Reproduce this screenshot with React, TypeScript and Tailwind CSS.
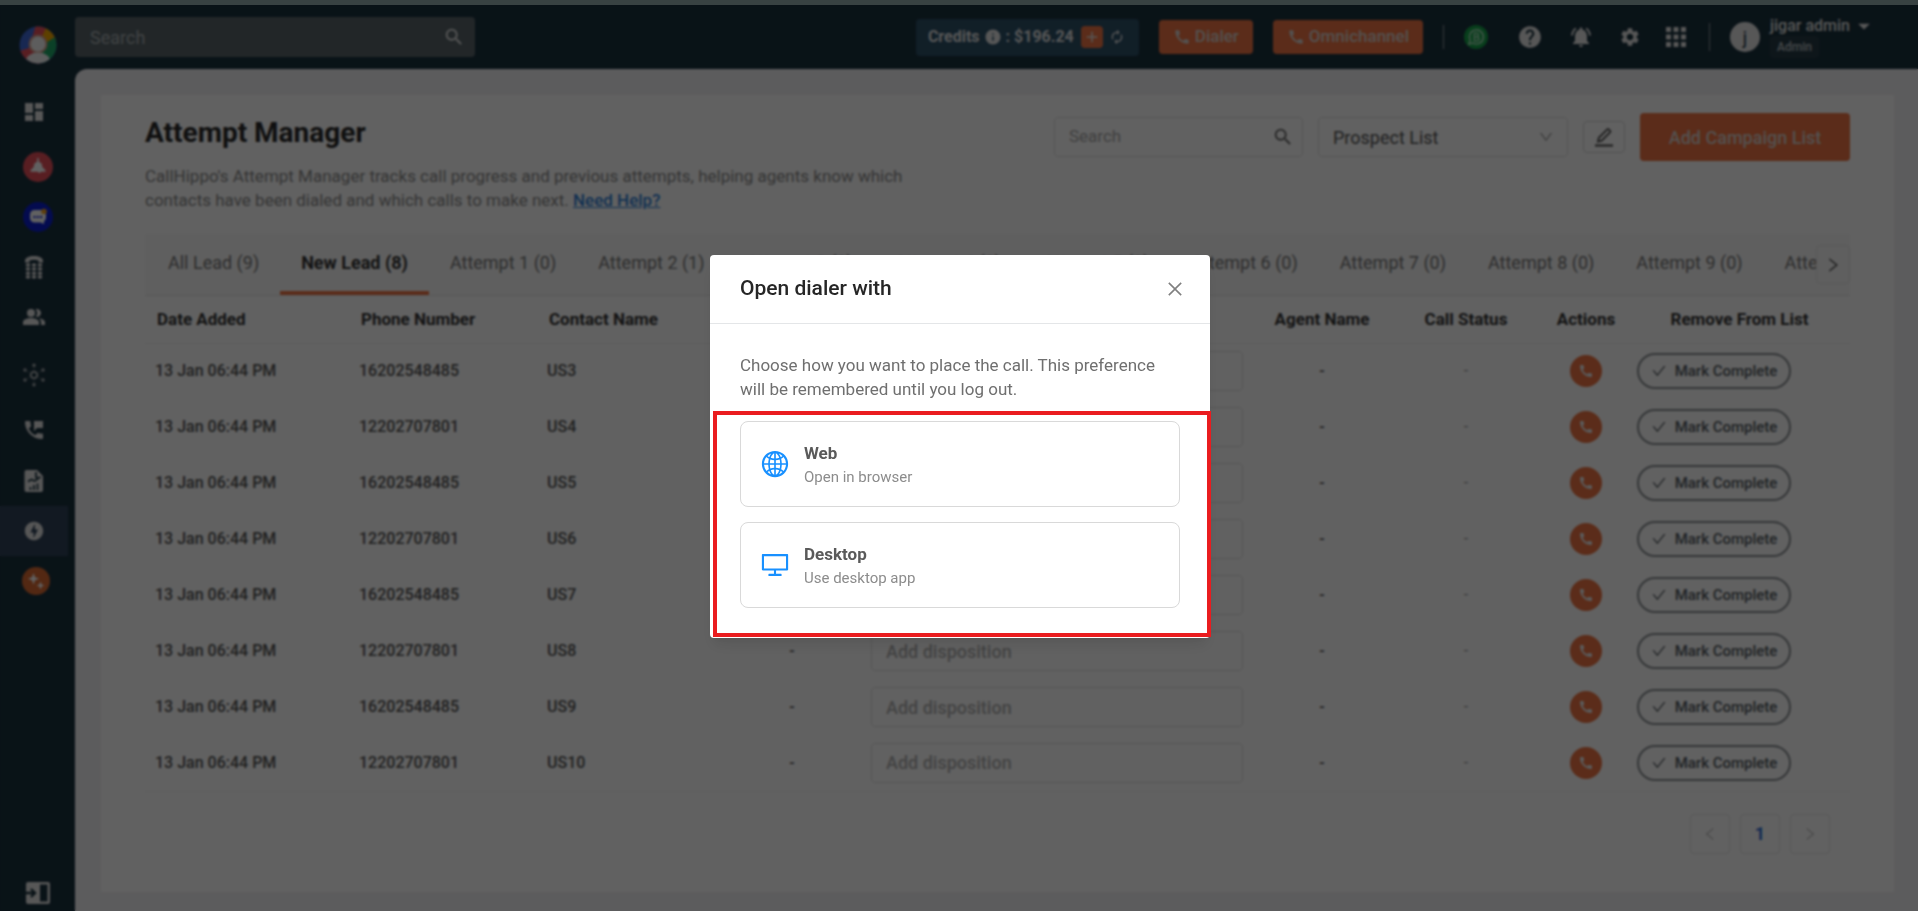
import type { ReactNode } from 'react';
import {
  MdAdd,
  MdApps,
  MdArrowDropDown,
  MdAutorenew,
  MdCall,
  MdDashboard,
  MdHelp,
  MdInfo,
  MdNotificationsActive,
  MdOfflineBolt,
  MdPeopleAlt,
  MdPermPhoneMsg,
  MdSearch,
  MdSettings,
} from 'react-icons/md';
import {
  AiOutlineCheck,
  AiOutlineClose,
  AiOutlineDesktop,
  AiOutlineDown,
  AiOutlineGlobal,
  AiOutlineLeft,
  AiOutlineRight,
} from 'react-icons/ai';

const leads = [
  { phone: '16202548485', name: 'US3' },
  { phone: '12202707801', name: 'US4' },
  { phone: '16202548485', name: 'US5' },
  { phone: '12202707801', name: 'US6' },
  { phone: '16202548485', name: 'US7' },
  { phone: '12202707801', name: 'US8' },
  { phone: '16202548485', name: 'US9' },
  { phone: '12202707801', name: 'US10' },
];

const tabs = [
  'All Lead (9)',
  'New Lead (8)',
  'Attempt 1 (0)',
  'Attempt 2 (1)',
  'Attempt 3 (0)',
  'Attempt 4 (0)',
  'Attempt 5 (0)',
  'Attempt 6 (0)',
  'Attempt 7 (0)',
  'Attempt 8 (0)',
  'Attempt 9 (0)',
  'Attempt 10 (0)',
];

function Logo() {
  return (
    <svg viewBox="0 0 38 38" className="size-[38px]">
      <clipPath id="logo-clip">
        <circle cx="19" cy="19" r="18.5" />
      </clipPath>
      <g clipPath="url(#logo-clip)">
        <rect width="38" height="38" fill="#3f6ad8" />
        <path d="M8 30 L17 -2 L30 -2 L24 12 Z" fill="#e8505b" />
        <path d="M19 19 L27 2 L42 4 L36 16 Z" fill="#f5a800" />
        <path d="M22 20 L36 11 L40 14 L40 40 L24 40 Z" fill="#1fa968" />
        <path d="M19 19 L-2 26 L4 40 L22 40 Z" fill="#e8505b" />
        <circle cx="19" cy="18" r="9.500" fill="#d9a08e" />
        <circle cx="19" cy="18" r="7.500" fill="#f4f4f4" />
        <ellipse cx="19" cy="35" rx="12" ry="8.500" fill="#f4f4f4" />
      </g>
    </svg>
  );
}

function AlertIcon() {
  return (
    <svg viewBox="0 0 30 30" className="size-[30px]">
      <circle cx="15" cy="15" r="15" fill="#e8505b" />
      <path d="M14.200 6h1.600v3.500l3 2.200.5 3.300 3.200 3.300v1.500h-4.300l-1.700 1.500-1.800-1.500H7.500v-1.500l3.200-3.300.5-3.300 3-2.200z" fill="#fff" />
    </svg>
  );
}

function ChatIcon() {
  return (
    <svg viewBox="0 0 30 30" className="size-[30px]">
      <circle cx="15" cy="15" r="15" fill="#0b1fd0" />
      <path d="M11.500 8h7a4.500 4.500 0 0 1 4.500 4.500v3a4.500 4.500 0 0 1-2 3.700V22l-3.500-1.500h-6A4.500 4.500 0 0 1 7 16v-3.500A4.500 4.500 0 0 1 11.500 8z" fill="#fff" />
      <path d="M10.500 15h9" stroke="#0b1fd0" strokeWidth="1.800" strokeDasharray="2 1.300" />
      <circle cx="21" cy="9.500" r="2.800" fill="#f5a623" />
    </svg>
  );
}

function KeypadPhoneIcon() {
  return (
    <svg viewBox="0 0 20 24" className="h-6 w-5" fill="currentColor">
      <path d="M1 6C1 2.600 5 1 10 1s9 1.600 9 5v1.500h-4.500V5.600c-1.300-.6-3-.8-4.500-.8s-3.200.2-4.500.8v1.900H1z" />
      {[8.500, 12.600, 16.700, 20.600].map((y) =>
        [4, 10, 16].map((x) => <rect key={`${x}-${y}`} x={x - 2.100} y={y} width="4.200" height="3" rx="1" />),
      )}
    </svg>
  );
}

function HubIcon() {
  return (
    <svg viewBox="0 0 24 24" className="size-6 text-[#a9afb2]" fill="none" stroke="currentColor">
      <circle cx="12" cy="12" r="3.300" strokeWidth="2" />
      <g fill="currentColor" stroke="none">
        <circle cx="12" cy="2.300" r="1.700" />
        <circle cx="12" cy="21.700" r="1.700" />
        <circle cx="3" cy="7" r="1.700" />
        <circle cx="21" cy="7" r="1.700" />
        <circle cx="3" cy="17" r="1.700" />
        <circle cx="21" cy="17" r="1.700" />
      </g>
      <path d="M12 4v3M12 17v3M4.500 8l2.500 1.300M19.500 8L17 9.300M4.500 16l2.500-1.300M19.500 16L17 14.700" strokeWidth=".4" />
    </svg>
  );
}

function ReportIcon() {
  return (
    <svg viewBox="0 0 20 24" className="h-6 w-5">
      <path d="M2.500 1H13l6 6v14a2 2 0 0 1-2 2H2.500a2 2 0 0 1-2-2V3a2 2 0 0 1 2-2z" fill="currentColor" />
      <path d="M12 3v5.500h5M4 12.500l3.500-2 3 1.500 4-2.500M6.500 21v-3M10 21v-5M13.500 21v-6.500" fill="none" stroke="#1a323e" strokeWidth="1.700" />
    </svg>
  );
}

function SparkIcon() {
  return (
    <svg viewBox="0 0 28 28" className="size-7">
      <circle cx="14" cy="14" r="14" fill="#d96a33" />
      <path d="M11.500 6l1.500 4.200 4.200 1.500-4.200 1.500-1.500 4.200-1.500-4.200-4.200-1.500 4.200-1.500zM18.500 14.500l1.100 2.900 2.900 1.100-2.900 1.100-1.100 2.900-1.100-2.900-2.900-1.100 2.900-1.100z" fill="#fff" />
    </svg>
  );
}

function ExpandIcon() {
  return (
    <svg viewBox="0 0 26 24" className="h-6 w-[26px]">
      <rect x="1" y="1" width="24" height="22" rx="2" fill="currentColor" />
      <rect x="15" y="3.500" width="7.500" height="17" fill="#1a323e" />
      <path d="M0 12h9M6 8l4 4-4 4" fill="none" stroke="#1a323e" strokeWidth="2.400" />
    </svg>
  );
}

function WhatsAppIcon() {
  return (
    <svg viewBox="0 0 24 24" className="size-6">
      <circle cx="12" cy="12" r="12" fill="#16a34a" />
      <path d="M5 19l1.200-3.800A7 7 0 1 1 8.900 18z" fill="none" stroke="#a7dcb9" strokeWidth="1.600" />
      <path d="M10.300 8.300h2.400a1.800 1.800 0 0 1 0 3.600h-2.400zM10.300 11.900h2.800a1.900 1.900 0 0 1 0 3.800h-2.800z" fill="none" stroke="#a7dcb9" strokeWidth="1.500" />
    </svg>
  );
}

function PencilIcon() {
  return (
    <svg viewBox="0 0 20 20" className="size-5" fill="none" stroke="currentColor" strokeWidth="1.800">
      <path d="M4 14.500l.8-3.700 8.500-8.500a1 1 0 0 1 1.400 0l1.500 1.500a1 1 0 0 1 0 1.400l-8.500 8.500z" />
      <path d="M1 18.500h18" strokeWidth="2.200" />
    </svg>
  );
}

function NavItem({ label, active, className, children }: { label: string; active?: boolean; className: string; children: ReactNode }) {
  return (
    <a href="#" aria-label={label} className={`flex h-[50px] w-[68px] items-center justify-center ${active ? 'bg-[#31435a]' : ''} ${className}`}>
      {children}
    </a>
  );
}

function Sidebar() {
  return (
    <nav aria-label="Main" className="flex w-[75px] shrink-0 flex-col pt-5 pb-1 text-[#e4e4e4]">
      <a href="#" aria-label="Home" className="flex h-10 items-center justify-center">
        <Logo />
      </a>
      <NavItem label="Dashboard" className="mt-[22px]"><MdDashboard className="size-6" /></NavItem>
      <NavItem label="Alerts" className="mt-[5px] pl-2"><AlertIcon /></NavItem>
      <NavItem label="Chat" className="pl-2"><ChatIcon /></NavItem>
      <NavItem label="Dialpad" className=""><KeypadPhoneIcon /></NavItem>
      <NavItem label="Team" className=""><MdPeopleAlt className="size-6" /></NavItem>
      <NavItem label="Integrations" className="mt-2"><HubIcon /></NavItem>
      <NavItem label="Call logs" className="mt-[5px]"><MdPermPhoneMsg className="size-6" /></NavItem>
      <NavItem label="Reports" className="mt-px"><ReportIcon /></NavItem>
      <NavItem label="Power dialer" active className=""><MdOfflineBolt className="size-[22px]" /></NavItem>
      <NavItem label="AI" className="pl-1"><SparkIcon /></NavItem>
      <button type="button" aria-label="Expand menu" className="mt-auto flex justify-center pb-0.5">
        <ExpandIcon />
      </button>
    </nav>
  );
}

function Header() {
  return (
    <header className="flex h-16 shrink-0 items-center pr-10 text-[#e4e4e4]">
      <label className="flex h-10 w-[400px] items-center rounded-sm bg-[#59656a] pr-[10px] pl-[15px]">
        <input type="search" aria-label="Search" placeholder="Search" className="min-w-0 flex-1 bg-transparent text-[18px] placeholder:text-[#a9b0b3] focus:outline-none" />
        <MdSearch className="size-[22px]" />
      </label>
      <div className="ml-auto flex h-[37px] items-center rounded bg-[#2d5168] pr-[14px] pl-3 text-[16px] font-bold">
        Credits
        <MdInfo className="mx-1 size-[18px]" />
        : $196.24
        <button type="button" aria-label="Add credits" className="ml-[7px] flex size-[22px] items-center justify-center rounded bg-[#ee7444]">
          <MdAdd className="size-[18px]" />
        </button>
        <button type="button" aria-label="Refresh credits" className="ml-[6px]">
          <MdAutorenew className="size-4" />
        </button>
      </div>
      <button type="button" className="ml-5 flex h-[34px] items-center gap-1 rounded bg-[#ee7444] px-[14px] text-[17px] font-medium text-[#dcd4d0]">
        <MdCall className="size-[18px]" />
        Dialer
      </button>
      <button type="button" className="ml-5 flex h-[34px] items-center gap-1 rounded bg-[#ee7444] px-[14px] text-[17px] font-medium text-[#dcd4d0]">
        <MdCall className="size-[18px]" />
        Omnichannel
      </button>
      <div className="ml-5 h-6 w-px bg-[#8b979d]" />
      <button type="button" aria-label="WhatsApp" className="ml-5"><WhatsAppIcon /></button>
      <button type="button" aria-label="Help" className="ml-[29px]"><MdHelp className="size-[26px]" /></button>
      <button type="button" aria-label="Notifications" className="ml-[26px]"><MdNotificationsActive className="size-6" /></button>
      <button type="button" aria-label="Settings" className="ml-[26px]"><MdSettings className="size-[22px]" /></button>
      <button type="button" aria-label="Apps" className="ml-5"><MdApps className="size-[30px]" /></button>
      <div className="ml-[18px] h-7 w-px bg-[#8b979d]" />
      <button type="button" className="ml-5 flex items-center text-left">
        <span className="flex size-[30px] items-center justify-center rounded-full bg-[#e4e4e4] text-[18px] text-[#1a323e]">j</span>
        <span className="ml-[10px] flex flex-col items-start">
          <span className="flex h-5 items-center text-[16px] leading-5 font-medium">
            jigar admin
            <MdArrowDropDown className="size-7" />
          </span>
          <span className="rounded bg-[#263b46] px-[7px] text-[12px] leading-[22px] font-medium text-[#b9c0c4]">Admin</span>
        </span>
      </button>
    </header>
  );
}

function Toolbar() {
  return (
    <div className="flex justify-between">
      <div>
        <h1 className="text-[28px] leading-[38px] font-bold text-[#2b2b2b]">Attempt Manager</h1>
        <p className="mt-3 text-[17px] leading-6 text-[#8a8a8a]">
          CallHippo&apos;s Attempt Manager tracks call progress and previous attempts, helping agents know which
          <br />
          contacts have been dialed and which calls to make next.{' '}
          <a href="#" className="font-medium text-[#2f7fd6] underline">Need Help?</a>
        </p>
      </div>
      <div className="-mt-px flex h-12 items-center">
        <label className="flex h-10 w-[249px] items-center rounded border border-[#e2e2e2] pr-2 pl-[14px]">
          <input type="search" aria-label="Search lists" placeholder="Search" className="min-w-0 flex-1 bg-transparent text-[17px] placeholder:text-[#a8a8a8] focus:outline-none" />
          <MdSearch className="size-[22px] text-[#666]" />
        </label>
        <div className="relative ml-[15px] flex items-center">
          <select aria-label="Prospect list" className="h-10 w-[250px] appearance-none rounded border border-[#e2e2e2] bg-transparent px-[14px] text-[18px] text-[#555]">
            <option>Prospect List</option>
          </select>
          <AiOutlineDown className="pointer-events-none absolute right-[14px] size-4 text-[#a0a0a0]" />
        </div>
        <button type="button" aria-label="Edit list" className="ml-[15px] flex h-8 w-[42px] items-center justify-center rounded border border-[#d6d6d6] text-[#555]">
          <PencilIcon />
        </button>
        <button type="button" className="ml-[15px] h-12 w-[210px] rounded bg-[#ee7444] text-[18px] font-medium text-[#dcd4d0]">Add Campaign List</button>
      </div>
    </div>
  );
}

function Tabs() {
  return (
    <div className="relative mt-[22px] flex h-[62px] overflow-hidden border-b border-[#e6e6e6] bg-[#fafafa] pl-0.5">
      {tabs.map((tab) => (
        <button
          key={tab}
          type="button"
          className={
            tab === 'New Lead (8)'
              ? 'shrink-0 border-b-4 border-[#ee7444] px-[21px] text-[18px] font-bold text-[#333]'
              : 'shrink-0 border-b-4 border-transparent px-[21px] text-[18px] text-[#777]'
          }
        >
          {tab}
        </button>
      ))}
      <button type="button" aria-label="More tabs" className="absolute top-[11px] right-0 flex h-[39px] w-[34px] items-center justify-center rounded border border-[#e6e6e6] bg-[#fafafa] text-[#555]">
        <AiOutlineRight className="size-[18px]" />
      </button>
    </div>
  );
}

function LeadTable() {
  return (
    <table className="w-full table-fixed border-b border-[#f4f4f4] text-[16px]">
      <colgroup>
        <col className="w-[204px]" />
        <col className="w-[188px]" />
        <col className="w-[188px]" />
        <col className="w-[134px]" />
        <col />
        <col className="w-[134px]" />
        <col className="w-[154px]" />
        <col className="w-[86px]" />
        <col className="w-[221px]" />
      </colgroup>
      <thead>
        <tr className="h-[47px] border-b border-[#f0f0f0] text-[17px] text-[#333]">
          <th scope="col" className="pl-3 text-left font-bold">Date Added</th>
          <th scope="col" className="pl-3 text-left font-bold">Phone Number</th>
          <th scope="col" className="pl-3 text-left font-bold">Contact Name</th>
          <th scope="col" className="font-bold">Attempts</th>
          <th scope="col" className="font-bold">Disposition</th>
          <th scope="col" className="font-bold">Agent Name</th>
          <th scope="col" className="font-bold">Call Status</th>
          <th scope="col" className="font-bold">Actions</th>
          <th scope="col" className="font-bold">Remove From List</th>
        </tr>
      </thead>
      <tbody>
        {leads.map((lead) => (
          <tr key={lead.name} className="h-14 text-[#555]">
            <td className="pl-[10px] font-medium">13 Jan 06:44 PM</td>
            <td className="pl-[10px] font-medium">{lead.phone}</td>
            <td className="pl-[10px] font-medium">{lead.name}</td>
            <td className="text-center font-medium">-</td>
            <td className="px-3">
              <input aria-label={`Disposition for ${lead.name}`} placeholder="Add disposition" className="block h-10 w-full rounded border border-[#e2e2e2] bg-transparent px-[14px] text-[18px] font-medium placeholder:text-[#b0b0b0]" />
            </td>
            <td className="text-center font-medium">-</td>
            <td className="text-center text-[#999]">-</td>
            <td>
              <button type="button" aria-label={`Call ${lead.name}`} className="mx-auto flex size-8 items-center justify-center rounded-full bg-[#ee7444] text-[#eee]">
                <MdCall className="size-4" />
              </button>
            </td>
            <td className="pl-2">
              <button type="button" className="flex h-9 w-[154px] items-center justify-center gap-2 rounded-full border-2 border-[#8b9094] text-[15px] font-medium text-[#555c62]">
                <AiOutlineCheck className="size-4" />
                Mark Complete
              </button>
            </td>
          </tr>
        ))}
      </tbody>
    </table>
  );
}

function Pagination() {
  return (
    <nav aria-label="Pagination" className="mt-[22px] flex justify-end gap-[10px] pr-5 pb-9">
      <button type="button" aria-label="Previous page" className="flex size-10 items-center justify-center rounded border border-[#e6e6e6] text-[#c4c4c4]">
        <AiOutlineLeft className="size-4" />
      </button>
      <button type="button" aria-current="page" className="size-10 rounded border border-[#e6e6e6] text-[18px] font-bold text-[#2f6fd6]">1</button>
      <button type="button" aria-label="Next page" className="flex size-10 items-center justify-center rounded border border-[#e6e6e6] text-[#c4c4c4]">
        <AiOutlineRight className="size-4" />
      </button>
    </nav>
  );
}

function DialerOption({ icon, title, hint }: { icon: ReactNode; title: string; hint: string }) {
  return (
    <button type="button" className="flex h-[86px] w-full items-center gap-[14px] rounded-lg border border-[#d9d9d9] px-[19px] text-left">
      <span className="text-[#1890ff]">{icon}</span>
      <span className="flex flex-col">
        <span className="text-[17px] leading-[26px] font-bold text-[#5a5a5a]">{title}</span>
        <span className="text-[15px] leading-[22px] text-[#8c8c8c]">{hint}</span>
      </span>
    </button>
  );
}

function DialerDialog() {
  return (
    <div className="absolute inset-x-0 top-[5px] bottom-0 flex items-start justify-center bg-black/62 pt-[250px] pl-0.5 backdrop-blur-[1px]">
      <section role="dialog" aria-modal="true" aria-labelledby="dialer-title" className="w-[500px] rounded-sm bg-white shadow-lg">
        <div className="flex h-[69px] items-center justify-between border-b border-[#e4e6e8] pr-[25px] pl-[30px]">
          <h2 id="dialer-title" className="text-[21px] font-medium text-[#262626]">Open dialer with</h2>
          <button type="button" aria-label="Close" className="text-[#808080]">
            <AiOutlineClose className="size-5" />
          </button>
        </div>
        <p className="px-[30px] pt-[29px] text-[17px] leading-6 text-[#6f6f6f]">
          Choose how you want to place the call. This preference
          <br />
          will be remembered until you log out.
        </p>
        <div className="mt-[10px] -mr-px mb-px ml-[3px] flex flex-col gap-[15px] border-4 border-[#ea1c1f] pt-[6px] pr-[27px] pb-[25px] pl-[23px]">
          <DialerOption icon={<AiOutlineGlobal className="size-[30px]" />} title="Web" hint="Open in browser" />
          <DialerOption icon={<AiOutlineDesktop className="size-[30px]" />} title="Desktop" hint="Use desktop app" />
        </div>
      </section>
    </div>
  );
}

export default function App() {
  return (
    <div className="relative flex min-h-screen flex-col font-['Roboto',sans-serif]">
      <div className="h-[5px] bg-[#384242]" />
      <div className="flex flex-1 bg-[#1a323e]">
        <Sidebar />
        <div className="flex min-w-0 flex-1 flex-col">
          <Header />
          <div className="flex-1 rounded-tl-xl bg-[#f2f1f4] pt-[26px] pr-6 pb-[19px] pl-[26px]">
            <main className="h-full bg-white px-11 pt-[19px]">
              <Toolbar />
              <Tabs />
              <LeadTable />
              <Pagination />
            </main>
          </div>
        </div>
      </div>
      <DialerDialog />
    </div>
  );
}
